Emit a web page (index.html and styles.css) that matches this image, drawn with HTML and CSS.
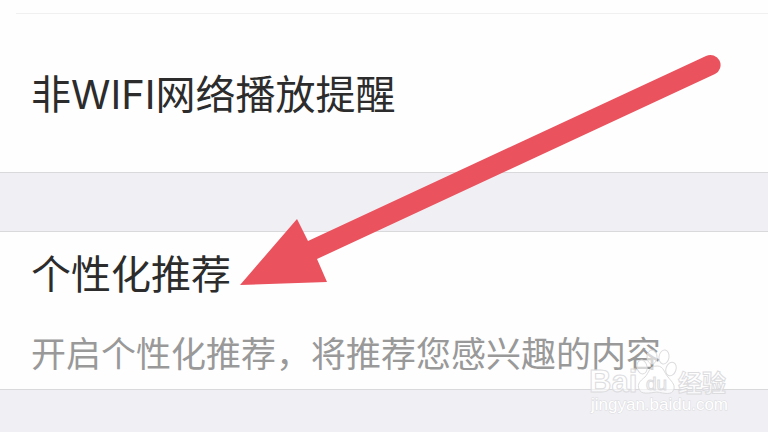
FILE: index.html
```html
<!DOCTYPE html>
<html lang="zh-CN">
<head>
    <meta charset="UTF-8">
    <meta name="viewport" content="width=device-width, initial-scale=1.0">
    <title>设置</title>
    <link rel="stylesheet" href="styles.css">
</head>
<body>
    <main class="settings">
        <section class="group">
            <div class="divider"></div>
            <div class="row">
                <h2>非WIFI网络播放提醒</h2>
            </div>
        </section>

        <section class="group group-recommend">
            <h2>个性化推荐</h2>
            <p>开启个性化推荐，将推荐您感兴趣的内容</p>
        </section>
    </main>

    <!-- Arrow pointing at the recommend setting -->
    <svg class="arrow" width="768" height="432" viewBox="0 0 768 432" aria-hidden="true">
        <path d="M240 285L297 219L308 241L706 56A10 10 0 0 1 715 74L317 259L327 282Z"/>
    </svg>

    <!-- Watermark -->
    <svg class="watermark" width="150" height="70" viewBox="0 0 150 70" role="img" aria-label="Baidu经验">
        <g class="paw">
            <ellipse cx="62" cy="21" rx="5" ry="7" transform="rotate(-12 62 21)"/>
            <ellipse cx="72" cy="11" rx="5" ry="7"/>
            <ellipse cx="84" cy="11" rx="5" ry="7" transform="rotate(10 84 11)"/>
            <ellipse cx="91" cy="23" rx="5" ry="7" transform="rotate(20 91 23)"/>
            <path d="M77 20C69 20 69 27 65 31C60 35 57 38 59 43C61 49 69 47 77 46C84 47 92 50 94 43C95 38 91 35 88 31C84 27 84 20 77 20Z"/>
        </g>
        <text class="brand" x="9" y="46">Bai</text>
        <text class="brand-du" x="66" y="44">du</text>
        <text class="brand-cn" x="98" y="46">经验</text>
        <text class="site" x="11" y="64">jingyan.baidu.com</text>
    </svg>
</body>
</html>
```
FILE: styles.css
```css
body {
    position: relative;
    margin: 0;
    min-height: 100vh;
    overflow: hidden;
    background-color: #efeff4;
    font-family: Inter, "Noto Sans CJK SC", sans-serif;
}

.settings {
    display: flex;
    flex-direction: column;
    gap: 58px;
}

.group {
    background-color: #fefefe;
    border-bottom: 1px solid #d9d9dc;
}

.divider {
    margin-left: 16px;
    padding-top: 13px;
    border-bottom: 1px solid #f0f0f0;
}

.row {
    padding: 51px 31px 47px;
}

h2 {
    margin: 0;
    color: #2c2c2c;
    font-size: 40px;
    font-weight: 400;
    line-height: 60px;
}

.group-recommend {
    padding: 13px 31px 8px;
    border-top: 1px solid #d9d9dc;
}

.group-recommend p {
    margin: 22px 0 0;
    color: #999;
    font-size: 35px;
    font-weight: 400;
    line-height: 54px;
    white-space: nowrap;
}

.arrow {
    position: absolute;
    top: 0;
    left: 0;
    fill: #ea525d;
}

.watermark {
    position: absolute;
    top: 346px;
    left: 580px;
    font-family: "Liberation Sans", "Noto Sans CJK SC", sans-serif;
    fill: #fff;
    fill-opacity: 0.6;
    stroke: #dcdcde;
    stroke-width: 1px;
}

.brand {
    font-size: 31px;
    font-weight: bold;
}

.brand-du {
    font-size: 19px;
}

.brand-cn {
    font-size: 24px;
    font-weight: bold;
}

.site {
    font-size: 17px;
    paint-order: stroke;
    fill-opacity: 1;
}
```
